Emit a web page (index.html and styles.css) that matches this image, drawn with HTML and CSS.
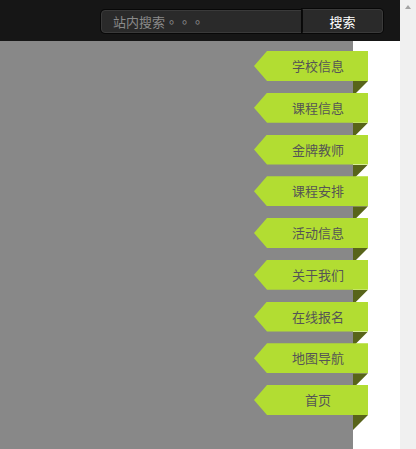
FILE: index.html
```html
<!DOCTYPE html>
<html lang="zh">
<head>
<meta charset="utf-8">
<title>导航</title>
<link rel="stylesheet" href="styles.css">
</head>
<body>
<div class="window">
  <div class="page">
    <header class="topbar">
      <form class="search">
        <input class="search-input" type="text" lang="zh-TW" placeholder="站内搜索。。。">
        <button class="search-btn" type="button">搜索</button>
      </form>
    </header>
    <div class="content">
      <div class="stage">
        <nav class="tabs">
          <a class="tab"><span class="tab-label">学校信息</span></a>
          <a class="tab"><span class="tab-label">课程信息</span></a>
          <a class="tab"><span class="tab-label">金牌教师</span></a>
          <a class="tab"><span class="tab-label">课程安排</span></a>
          <a class="tab"><span class="tab-label">活动信息</span></a>
          <a class="tab"><span class="tab-label">关于我们</span></a>
          <a class="tab"><span class="tab-label">在线报名</span></a>
          <a class="tab"><span class="tab-label">地图导航</span></a>
          <a class="tab"><span class="tab-label">首页</span></a>
        </nav>
      </div>
      <div class="side"></div>
    </div>
  </div>
  <div class="scrollbar"><span class="scroll-up"></span></div>
</div>
</body>
</html>
```

FILE: styles.css
```css
html, body {
  margin: 0;
  padding: 0;
  height: 100%;
  overflow: hidden;
}
body {
  font-family: "Noto Sans CJK SC", "Liberation Sans", sans-serif;
  font-size: 13px;
}
.window {
  display: flex;
  width: 416px;
  height: 449px;
}
.page {
  width: 400px;
  display: flex;
  flex-direction: column;
}
.topbar {
  height: 41px;
  box-sizing: border-box;
  background: #161616;
  display: flex;
  justify-content: flex-end;
  align-items: flex-start;
  padding: 9px 17px 0 0;
}
.search {
  display: flex;
  margin: 0;
  align-items: flex-start;
}
.search-input {
  box-sizing: border-box;
  width: 201px;
  height: 23px;
  margin: 1px 0 0 0;
  padding: 0 0 0 11px;
  border: 1px solid #3a3a3a;
  border-radius: 4px 0 0 4px;
  background: #2a2a2a;
  box-shadow: 0 0 0 1px #080808;
  color: #8a8a8a;
  font-family: "Noto Sans CJK TC", "Noto Sans CJK SC", sans-serif;
  font-size: 13px;
  outline: none;
}
.search-input::placeholder {
  color: #8a8a8a;
}
.search-btn {
  box-sizing: border-box;
  width: 81px;
  height: 24px;
  margin: 0;
  padding: 0;
  border: 1px solid #3a3a3a;
  border-left-color: #0a0a0a;
  border-radius: 0 4px 4px 0;
  background: #2a2a2a;
  box-shadow: 0 0 0 1px #080808;
  color: #ffffff;
  font-family: "Noto Sans CJK SC", sans-serif;
  font-size: 13px;
}
.content {
  flex: 1;
  display: flex;
}
.stage {
  width: 353px;
  background: #888888;
  display: flex;
  justify-content: flex-end;
}
.side {
  flex: 1;
  background: #ffffff;
}
.tabs {
  display: flex;
  flex-direction: column;
  gap: 11.75px;
  padding-top: 10px;
  margin-right: -15px;
  position: relative;
  z-index: 1;
}
.tab {
  position: relative;
  display: block;
  width: 114px;
  height: 30px;
}
.tab::after {
  content: "";
  position: absolute;
  right: 0;
  top: 30px;
  width: 15px;
  height: 15px;
  background: #58641a;
  clip-path: polygon(0 0, 100% 0, 0 100%);
}
.tab-label {
  position: relative;
  z-index: 1;
  display: block;
  height: 30px;
  box-sizing: border-box;
  padding-left: 14px;
  background: #b2dd32;
  clip-path: polygon(0 50%, 13px 0, 100% 0, 100% 100%, 13px 100%);
  color: #555555;
  text-align: center;
  line-height: 30px;
  font-size: 13px;
}
.scrollbar {
  width: 16px;
  background: #f0f0f0;
  position: relative;
}
.scroll-up {
  position: absolute;
  left: 5px;
  top: 5px;
  width: 0;
  height: 0;
  border-left: 3.5px solid transparent;
  border-right: 3.5px solid transparent;
  border-bottom: 4px solid #a3a3a3;
}
```
